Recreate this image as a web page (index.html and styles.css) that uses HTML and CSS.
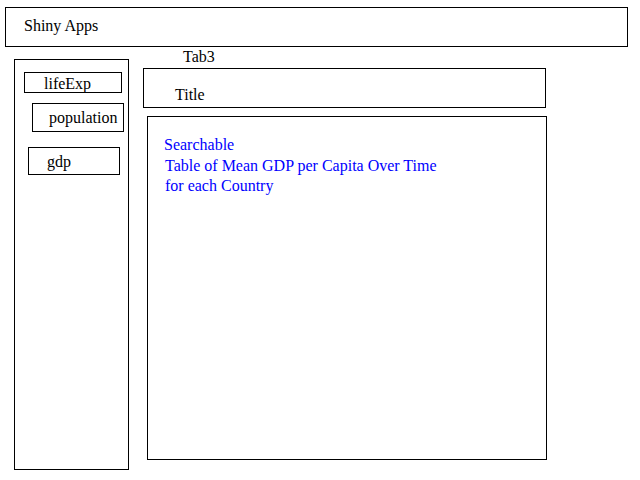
FILE: index.html
```html
<!DOCTYPE html>
<html lang="en">
<head>
<meta charset="utf-8">
<title>Shiny Apps</title>
<link rel="stylesheet" href="styles.css">
</head>
<body>
<header class="header">Shiny Apps</header>
<div class="main">
  <aside class="sidebar">
    <div class="item item-life">lifeExp</div>
    <div class="item item-pop">population</div>
    <div class="item item-gdp">gdp</div>
  </aside>
  <section class="panel">
    <div class="tab">Tab3</div>
    <div class="title-box">Title</div>
    <div class="content-box">
      <div class="blue">Searchable</div>
      <div class="blue indent">Table of Mean GDP per Capita Over Time</div>
      <div class="blue indent">for each Country</div>
    </div>
  </section>
</div>
</body>
</html>
```

FILE: styles.css
```css
* { box-sizing: border-box; }

html, body {
  margin: 0;
  padding: 0;
  background: #fff;
}

body {
  font-family: "Liberation Serif", "Times New Roman", serif;
  font-size: 16px;
  line-height: 18px;
  color: #000;
  width: 640px;
  height: 480px;
  overflow: hidden;
}

.header {
  margin: 7px 12px 0 5px;
  height: 40px;
  border: 1px solid #000;
  padding: 9px 0 0 18px;
}

.main {
  display: flex;
  align-items: flex-start;
}

.sidebar {
  margin: 12px 0 0 14px;
  width: 115px;
  height: 411px;
  border: 1px solid #000;
  display: flex;
  flex-direction: column;
  align-items: flex-start;
}

.item {
  border: 1px solid #000;
}

.item-life {
  margin: 12px 0 0 9px;
  width: 98px;
  height: 21px;
  padding: 2px 0 0 19px;
}

.item-pop {
  margin: 10px 0 0 17px;
  width: 92px;
  height: 29px;
  padding: 5px 0 0 16px;
}

.item-gdp {
  margin: 15px 0 0 13px;
  width: 92px;
  height: 28px;
  padding: 5px 0 0 18px;
}

.panel {
  margin-left: 14px;
  display: flex;
  flex-direction: column;
  align-items: flex-start;
}

.tab {
  margin-left: 40px;
  padding-top: 1px;
  height: 18px;
}

.title-box {
  margin-top: 3px;
  width: 403px;
  height: 40px;
  border: 1px solid #000;
  padding: 17px 0 0 31px;
}

.content-box {
  margin: 8px 0 0 4px;
  width: 400px;
  height: 344px;
  border: 1px solid #000;
  padding: 18px 0 0 16px;
  line-height: 20.5px;
}

.blue {
  color: #0000ff;
}

.indent {
  padding-left: 1px;
}
```
